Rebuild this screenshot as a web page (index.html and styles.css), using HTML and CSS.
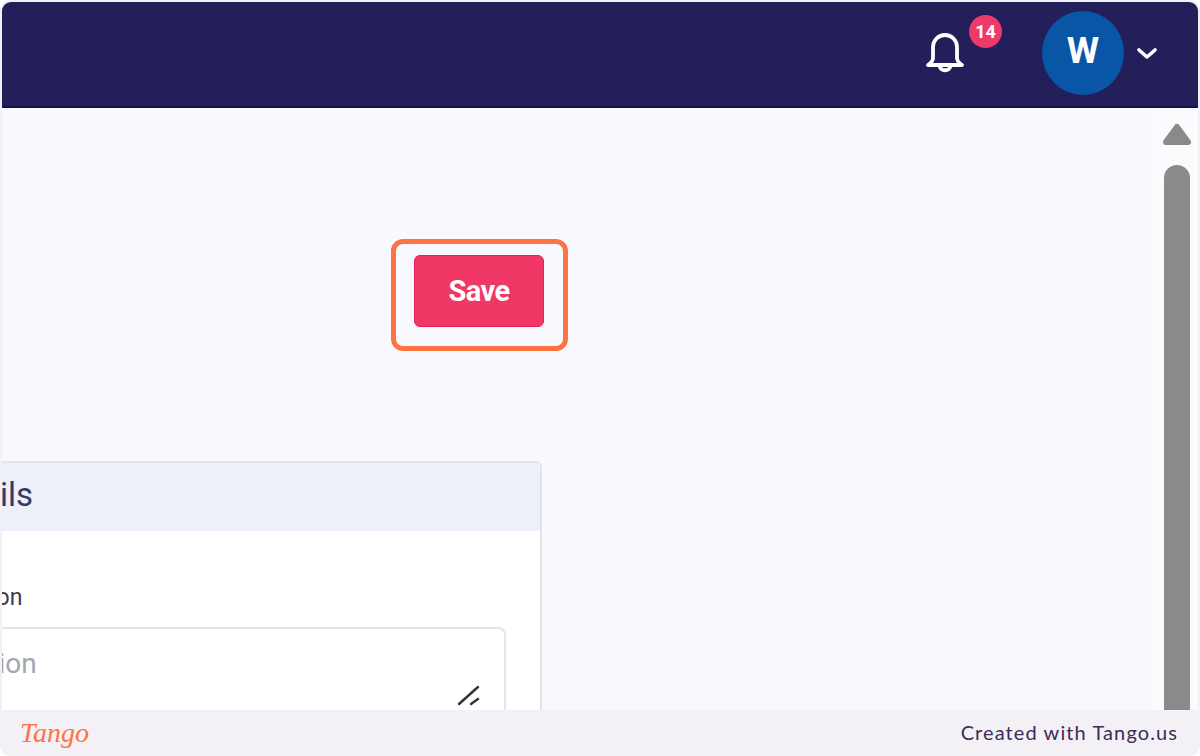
FILE: index.html
```html
<!DOCTYPE html>
<html lang="en">
<head>
<meta charset="utf-8">
<title>Save</title>
<link rel="stylesheet" href="styles.css">
</head>
<body>
<div class="frame">
  <div class="window">
    <header class="topbar">
      <div class="bell-wrap">
        <svg class="bell" viewBox="0 0 40 44" width="40" height="44" fill="none" stroke="#fff" stroke-width="3.800" stroke-linecap="round" stroke-linejoin="round">
          <path d="M8 25V14a12 12 0 0 1 24 0v11c0 3 2 5 5 7H3c3-2 5-4 5-7z"/>
          <path d="M14.500 32c0 7 11 7 11 0"/>
        </svg>
        <span class="badge">14</span>
      </div>
      <div class="avatar">W</div>
      <svg class="chev" viewBox="0 0 22 14" width="22" height="14" fill="none" stroke="#fff" stroke-width="3.600" stroke-linecap="round" stroke-linejoin="round"><path d="M3 3l8 7 8-7"/></svg>
    </header>
    <div class="body">
      <main class="content">
        <div class="actions">
          <div class="highlight"><button class="save">Save</button></div>
        </div>
        <section class="card">
          <div class="card-head">Details</div>
          <div class="card-body">
            <div class="label">Description</div>
            <div class="field">
              <span class="placeholder">Description</span>
              <svg class="grip" viewBox="0 0 24 24" width="24" height="24" stroke="#333" stroke-width="2.400" stroke-linecap="round"><path d="M3 20L22 3"/><path d="M15 20l7-5"/></svg>
            </div>
          </div>
        </section>
      </main>
      <div class="scrollbar">
        <svg class="arrow" viewBox="0 0 32 24" width="32" height="24"><path d="M16 4L27 19H5z" fill="#8a8a8a" stroke="#8a8a8a" stroke-width="6" stroke-linejoin="round"/></svg>
        <div class="thumb"></div>
      </div>
    </div>
    <footer class="footer">
      <span class="logo">Tango</span>
      <span class="credit">Created with Tango.us</span>
    </footer>
  </div>
</div>
</body>
</html>
```

FILE: styles.css
```css
* { box-sizing: border-box; }
html, body { margin: 0; height: 100%; }
body { background: #fff; font-family: Roboto, "Liberation Sans", sans-serif; overflow: hidden; }
.frame { width: 1200px; height: 756px; padding: 2px 2px 0 2px; background: #f3f1f6; border-radius: 10px; overflow: hidden; }
.window { height: 754px; display: flex; flex-direction: column; }

.topbar { flex: 0 0 106px; background: #221f5a; border-bottom: 2px solid #14104a; border-radius: 9px 9px 0 0; display: flex; align-items: center; justify-content: flex-end; padding: 0 40px 2px 0; }
.bell-wrap { display: flex; align-items: flex-start; margin-right: 40px; }
.bell { margin: 4px 0 0 0; }
.badge { width: 33px; height: 33px; margin: -14px 0 0 4px; border-radius: 50%; background: #ee3a68; color: #fff; font-size: 18px; font-weight: 700; display: flex; align-items: center; justify-content: center; }
.avatar { width: 82px; height: 84px; border-radius: 50%; background: #0a56a6; color: #fff; font-size: 37px; font-weight: 700; display: flex; align-items: center; justify-content: center; padding-bottom: 6px; }
.chev { margin: 2px 0 0 12px; }

.body { flex: 0 0 602px; display: flex; overflow: hidden; background: #f8f9fe; }
.content { flex: 1; min-width: 0; padding-top: 131px; }
.actions { display: flex; margin-left: 389px; }
.highlight { padding: 11px 19px 19px 18px; border: 5px solid #ff7243; border-radius: 12px; }
.save { display: block; width: 130px; height: 72px; padding: 0; background: #ef3866; border: 1px solid #e81c56; border-radius: 6px; color: #fff; font: 700 29px Roboto, sans-serif; letter-spacing: -0.6px; }

.card { width: 741px; margin: 110px 0 0 -201px; background: #fff; border: 2px solid #e3e4e8; border-radius: 6px; }
.card-head { height: 68px; background: #edf0f8; color: #343a63; font-size: 33px; line-height: 64px; padding-left: 129px; }
.card-body { padding: 52px 34px 0 0; }
.label { color: #3a3a4a; font-size: 23px; line-height: 30px; padding-left: 103px; }
.field { height: 120px; margin: 14px 0 0 0; border: 2px solid #e5e5e8; border-radius: 8px; padding: 16px 0 0 90px; display: flex; position: relative; }
.placeholder { color: #a2a6ad; font-size: 28px; line-height: 38px; }
.grip { position: absolute; right: 24px; bottom: 37px; }

.scrollbar { flex: 0 0 44px; background: #fbfbfd; display: flex; flex-direction: column; align-items: center; padding: 15px 0 0 2px; }
.arrow { display: block; }
.thumb { width: 26px; flex: 1; margin-top: 18px; background: #8a8a8a; border-radius: 13px 13px 0 0; }

.footer { flex: 1; display: flex; align-items: center; justify-content: space-between; padding: 0 22px 0 20px; margin: 0 -2px; }
.logo { color: #ff7243; font-family: "Liberation Serif", serif; font-style: italic; font-size: 28px; font-weight: 400; }
.credit { color: #3d2c57; font-family: Lato, sans-serif; font-size: 20px; letter-spacing: 1.1px; padding-bottom: 2px; }
```
